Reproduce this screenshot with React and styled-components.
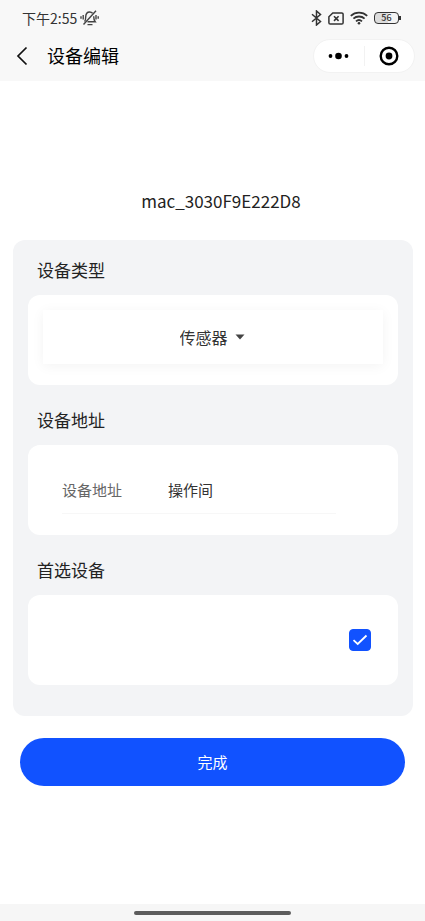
import React from "react";
import styled, { createGlobalStyle } from "styled-components";

const typeList = ["传感器", "控制器"];

const App = () => {
  const [type, setType] = React.useState(typeList[0]);
  const [address, setAddress] = React.useState("操作间");
  const [preferred, setPreferred] = React.useState(true);

  return (
    <Page>
      <GlobalStyle />
      <Header>
        <StatusBar>
          <Time>下午2:55</Time>
          <MuteIcon />
          <StatusIcons>
            <BluetoothIcon />
            <SimIcon />
            <WifiIcon />
            <Battery>56</Battery>
          </StatusIcons>
        </StatusBar>
        <NavBar>
          <BackButton aria-label="返回">
            <svg width="12" height="20" viewBox="0 0 12 20" fill="none" stroke="#111" strokeWidth="1.7">
              <path d="M10.5 1.5 2 10l8.500 8.500" />
            </svg>
          </BackButton>
          <NavTitle>设备编辑</NavTitle>
          <Capsule>
            <CapsuleButton aria-label="更多">
              <svg width="22" height="8" viewBox="0 0 22 8">
                <circle cx="2.500" cy="4" r="1.900" />
                <circle cx="10.500" cy="4" r="3.300" />
                <circle cx="18.500" cy="4" r="1.900" />
              </svg>
            </CapsuleButton>
            <CapsuleLine />
            <CapsuleButton aria-label="关闭">
              <svg width="20" height="20" viewBox="0 0 20 20">
                <circle cx="10" cy="10" r="8.300" fill="none" stroke="#000" strokeWidth="2.400" />
                <circle cx="10" cy="10" r="3.400" />
              </svg>
            </CapsuleButton>
          </Capsule>
        </NavBar>
      </Header>

      <Main>
        <DeviceName>mac_3030F9E222D8</DeviceName>

        <Panel>
          <SectionTitle>设备类型</SectionTitle>
          <Card>
            <Picker>
              <Select aria-label="设备类型" value={type} onChange={(e) => setType(e.target.value)}>
                {typeList.map((t) => (
                  <option key={t}>{t}</option>
                ))}
              </Select>
              <svg width="10" height="6" viewBox="0 0 10 6" fill="#444">
                <path d="M.5.5h9L5 5.500z" />
              </svg>
            </Picker>
          </Card>

          <SectionTitle>设备地址</SectionTitle>
          <Card>
            <Field>
              <FieldLabel htmlFor="address">设备地址</FieldLabel>
              <FieldInput id="address" value={address} onChange={(e) => setAddress(e.target.value)} />
            </Field>
          </Card>

          <SectionTitle>首选设备</SectionTitle>
          <Card>
            <CheckRow>
              <Checkbox
                type="checkbox"
                aria-label="首选设备"
                checked={preferred}
                onChange={(e) => setPreferred(e.target.checked)}
              />
              {preferred && (
                <Tick width="22" height="22" viewBox="0 0 22 22" fill="none" stroke="#fff" strokeWidth="1.800">
                  <path d="M4.500 11.200 8.700 15 17.500 6.500" />
                </Tick>
              )}
            </CheckRow>
          </Card>
        </Panel>

        <SubmitButton>完成</SubmitButton>
      </Main>

      <HomeBar>
        <HomeHandle />
      </HomeBar>
    </Page>
  );
};

const MuteIcon = () => (
  <svg width="19" height="16" viewBox="0 0 19 16" fill="none" stroke="#444" strokeWidth="1.400">
    <path d="M4.500 11.500c1-1 1.200-2.200 1.200-4.500 0-3 1.600-5 4-5 1.200 0 2.200.5 2.900 1.300M13.700 6.200c0 2.800.2 4 1.500 5.500H7.500" />
    <path d="M16 .8 3.500 14.500M7.500 14.600h5M3.200 5v4.500M1 6.300v2.400M16 5v4.500M18.200 6.300v2.400" />
  </svg>
);

const BluetoothIcon = () => (
  <svg width="11" height="16" viewBox="0 0 11 16" fill="none" stroke="#333" strokeWidth="1.500">
    <path d="M1 4.300 9.500 11.500 5.500 15V1l4 3.500L1 11.700" />
  </svg>
);

const SimIcon = () => (
  <svg width="16" height="13" viewBox="0 0 16 13" fill="none" stroke="#333" strokeWidth="1.500">
    <path d="M4.800.9h9a1.300 1.300 0 0 1 1.300 1.300v8.600a1.300 1.300 0 0 1-1.300 1.300H2.200A1.300 1.300 0 0 1 .9 10.800V4.700z" />
    <path d="m6 4.300 4.600 4.600M10.600 4.300 6 8.900" strokeWidth="1.600" />
  </svg>
);

const WifiIcon = () => (
  <svg width="18" height="14" viewBox="0 0 18 14" fill="none" stroke="#333" strokeWidth="1.800">
    <path d="M.8 4.800a12 12 0 0 1 16.400 0M3.400 7.700a8.200 8.200 0 0 1 11.200 0M6 10.400a4.500 4.500 0 0 1 6 0" />
    <circle cx="9" cy="12.300" r="1.300" fill="#333" stroke="none" />
  </svg>
);

const GlobalStyle = createGlobalStyle`
  * {
    box-sizing: border-box;
  }
  body {
    margin: 0;
    background: #fff;
  }
  body, button, input, select {
    font-family: "Noto Sans CJK SC", sans-serif;
  }
  svg {
    flex-shrink: 0;
  }
`;

const Page = styled.div`
  display: flex;
  flex-direction: column;
  min-height: 100vh;
  color: #222;
`;

const Header = styled.header`
  padding-bottom: 7px;
  background: #f8f8f8;
`;

const StatusBar = styled.div`
  display: flex;
  align-items: center;
  gap: 3px;
  height: 38px;
  padding: 0 26px 2px 22px;
`;

const Time = styled.span`
  font-size: 14px;
  color: #333;
`;

const StatusIcons = styled.div`
  display: flex;
  align-items: center;
  gap: 6px;
  margin-left: auto;
`;

const Battery = styled.span`
  position: relative;
  width: 25px;
  height: 12px;
  border: 1px solid #333;
  border-radius: 4px;
  background: linear-gradient(to right, #dcdcdc 56%, #f4f4f4 56%);
  font-size: 9px;
  font-weight: 500;
  line-height: 10px;
  text-align: center;
  color: #333;

  &::after {
    content: "";
    position: absolute;
    top: 3px;
    right: -3px;
    width: 2px;
    height: 4px;
    background: #333;
  }
`;

const NavBar = styled.div`
  display: flex;
  align-items: center;
  height: 36px;
  padding: 0 10px 0 16px;
`;

const BackButton = styled.button`
  display: flex;
  width: 31px;
  padding: 0;
  border: none;
  background: none;
`;

const NavTitle = styled.h1`
  margin: 0;
  padding-bottom: 2px;
  font-size: 18px;
  font-weight: 400;
  color: #000;
`;

const Capsule = styled.div`
  display: flex;
  align-items: center;
  width: 102px;
  height: 34px;
  margin-left: auto;
  border: 1px solid #f2f2f2;
  border-radius: 17px;
  background: #fff;
`;

const CapsuleButton = styled.button`
  display: flex;
  flex: 1;
  align-items: center;
  justify-content: center;
  height: 100%;
  padding: 0;
  border: none;
  background: none;
`;

const CapsuleLine = styled.span`
  width: 1px;
  height: 20px;
  background: #f2f2f2;
`;

const Main = styled.main`
  flex: 1;
  padding: 105px 12px 22px 13px;
`;

const DeviceName = styled.h2`
  margin: 0 0 24px;
  padding-left: 16px;
  font-size: 17px;
  font-weight: 400;
  line-height: 30px;
  text-align: center;
`;

const Panel = styled.section`
  padding: 5px 15px 31px;
  border-radius: 12px;
  background: #f3f4f6;
`;

const SectionTitle = styled.h3`
  margin: 0;
  padding-left: 9px;
  font-size: 17px;
  font-weight: 400;
  line-height: 50px;
`;

const Card = styled.div`
  height: 90px;
  padding: 15px;
  border-radius: 12px;
  background: #fff;

  & + ${SectionTitle} {
    margin-top: 10px;
  }
`;

const Picker = styled.div`
  display: flex;
  align-items: center;
  justify-content: center;
  gap: 6px;
  height: 54px;
  padding-right: 2px;
  box-shadow: 0 2px 12px rgba(0, 0, 0, 0.05);
`;

const Select = styled.select`
  appearance: none;
  padding: 0;
  border: none;
  background: none;
  font-size: 16px;
  color: #333;
`;

const Field = styled.div`
  display: flex;
  align-items: center;
  height: 54px;
  margin: 0 47px 0 19px;
  padding-top: 6px;
  border-bottom: 1px solid #f7f7f7;
`;

const FieldLabel = styled.label`
  width: 106px;
  font-size: 15px;
  color: #666;
`;

const FieldInput = styled.input`
  flex: 1;
  min-width: 0;
  padding: 0;
  border: none;
  outline: none;
  background: none;
  font-size: 15px;
  color: #333;
`;

const CheckRow = styled.div`
  position: relative;
  display: flex;
  align-items: center;
  justify-content: flex-end;
  height: 60px;
  padding-right: 12px;
`;

const Checkbox = styled.input`
  appearance: none;
  width: 22px;
  height: 22px;
  margin: 0;
  border: 1px solid #c8c9cc;
  border-radius: 4px;

  &:checked {
    border-color: #1152ff;
    background: #1152ff;
  }
`;

const Tick = styled.svg`
  position: absolute;
  top: 19px;
  right: 12px;
  pointer-events: none;
`;

const SubmitButton = styled.button`
  display: block;
  width: calc(100% - 15px);
  height: 48px;
  margin: 22px 0 0 7px;
  padding: 0 0 2px;
  border: none;
  border-radius: 24px;
  background: #1152ff;
  font-size: 15px;
  color: #fff;
`;

const HomeBar = styled.footer`
  display: flex;
  align-items: center;
  justify-content: center;
  height: 17px;
  background: #f6f6f6;
`;

const HomeHandle = styled.span`
  width: 37%;
  height: 4px;
  border-radius: 2px;
  background: #5c5c5c;
`;

export default App;
